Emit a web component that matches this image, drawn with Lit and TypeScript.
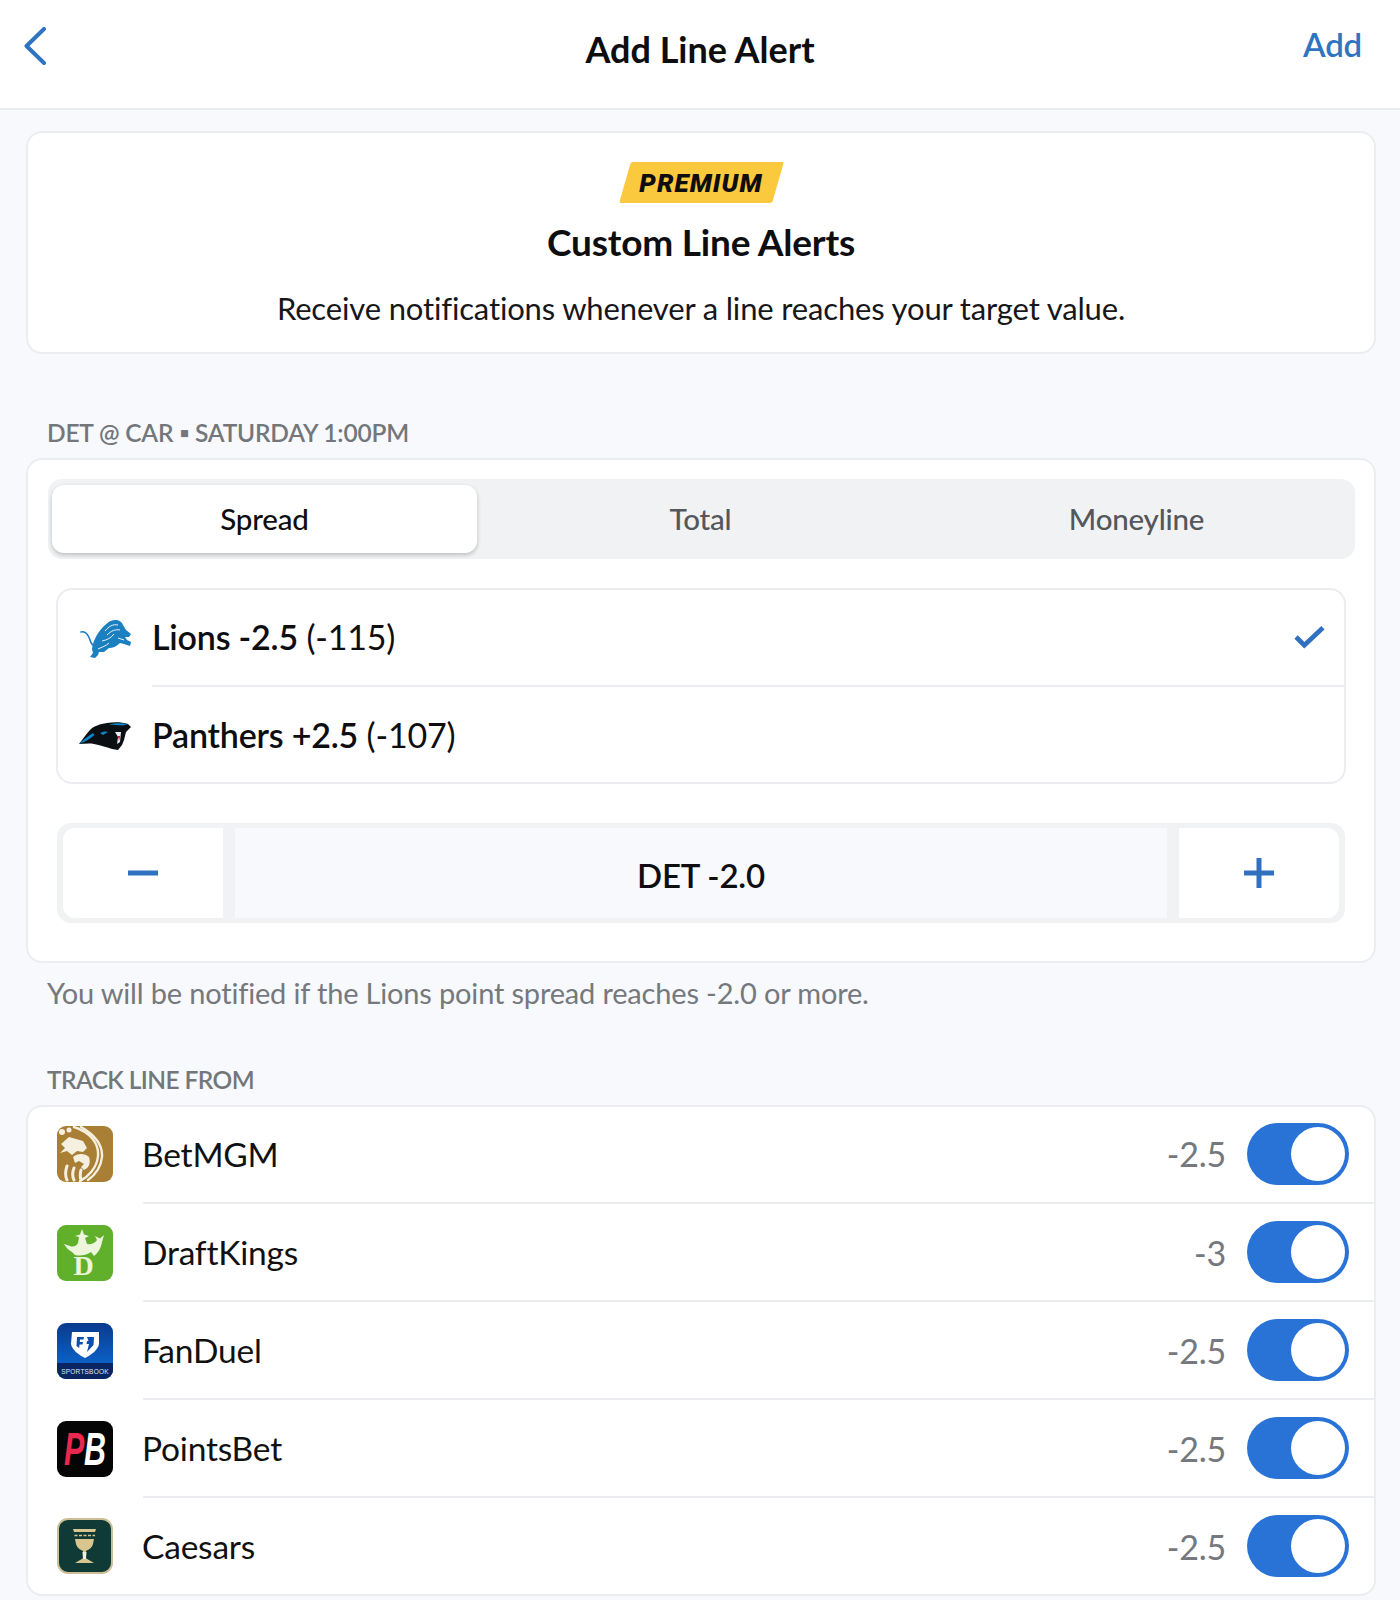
import { LitElement, html, css, svg } from "lit";
import { customElement } from "lit/decorators.js";

const lion = svg`<svg class="team lion" viewBox="0 0 51 39"><path fill="none" stroke="#1b7fc0" stroke-width="1.600" stroke-linecap="round" d="M1 13C5 12 8 15 10 21C11 25 13 27 16 27"/><path fill="#1b7fc0" d="M12 30C13 23 16 15 24 7C28 3 31 1 35 1C39 1 42 3 43 6L46 11L51 15L49 18L45 18L47 21L51 23L50 27L44 25L40 24C37 27 33 29 29 29L24 33L19 33L18 36L15 39L10 38L13 34Z"/><path fill="none" stroke="#fff" stroke-width=".9" d="M25 12C29 7 33 5 38 6M27 16C31 12 35 10 40 11M22 22C27 21 31 19 34 15M18 30C22 28 26 27 29 24M38 19L44 21"/></svg>`;
const panther = svg`<svg class="team panther" viewBox="0 0 52 28"><path fill="#0b0f14" d="M0 22C4 17 7 12 11 8C15 4 21 2 28 1C35 0 43 0 49 2L52 5L49 8L47 10L45 18L43 23L39 28L33 27C27 25 21 23 15 22C10 21 5 22 0 22Z"/><path fill="#0a86c9" d="M0 22C4 18 9 14 14 11L15.500 13C11 17 6 20 0 22ZM30 2.500C36 1 43 1 49 2L44 3.500C39 3 34 3 30 2.500ZM21 11C24 9.500 27 9 29 10L24 13Z"/><path fill="#e8eef0" d="M36 10L42 10L41 20L38 22L39 15Z"/><path fill="#b5121b" d="M39 14L41 14L40 19Z"/></svg>`;

const betmgm = svg`<svg viewBox="0 0 56 56"><rect width="56" height="56" rx="9" fill="#a97f35"/><g fill="none" stroke="#f5efe0" stroke-linecap="round"><path stroke-width="2.400" d="M17 1C33 6 42 17 41 30C40 42 31 51 23 55"/><path stroke-width="2.400" d="M24 1C36 8 46 18 45 31C44 41 38 49 31 54"/><path stroke-width="3" d="M10 40C8 46 8 50 10 54M17 42C15 47 15 50 17 54M24 44C23 48 23 51 24 54"/></g><path fill="#f5efe0" d="M4 18L12 11L26 15L30 22L26 26L20 25L15 29L10 25L3 27L8 22Z"/><path fill="#f5efe0" d="M16 31C20 27 28 27 32 31C34 37 32 42 27 44L24 41L27 38L22 35L18 37Z"/><circle cx="5" cy="6" r="3" fill="#f5efe0"/><circle cx="12" cy="4" r="2.500" fill="#f5efe0"/></svg>`;

const draftkings = svg`<svg viewBox="0 0 56 56"><rect width="56" height="56" rx="9" fill="#61b02b"/><path fill="#edf6dc" d="M7 19L13 21C15 22 19 22 21 18L22 12L18 11L23 9.500L25 4L27 9.500L32 11L28 13L30 19C34 20 38 18 40 15L38 11L43 13.500L47 10L45 17C44 23 41 28 37 31L34 27C28 31 22 31 18 30L15 27C11 25 9 22 7 19Z"/><text x="26.500" y="49.500" text-anchor="middle" class="dk">D</text></svg>`;

const fanduel = svg`<svg viewBox="0 0 56 56"><defs><linearGradient id="fd" x1="0" y1="0" x2="0" y2="1"><stop offset="0" stop-color="#0a3a8e"/><stop offset=".75" stop-color="#0c62c8"/></linearGradient></defs><rect width="56" height="56" rx="9" fill="url(#fd)"/><path fill="#0a2560" d="M0 40H56V47A9 9 0 0 1 47 56H9A9 9 0 0 1 0 47Z"/><path fill="#fff" d="M15 9H42L42 21C41 27 34 32 28 35C22 32 15 27 14 21Z"/><path fill="#0c4fae" d="M20 14H27L26.500 16.500H23L22.800 19H26L25.500 21.500H22.500L22.200 25L19.500 23ZM30 14H37L36.500 22L30 29L32 21H29.500L30 18H31.500Z"/><text x="28" y="51" text-anchor="middle" class="fd">SPORTSBOOK</text></svg>`;

const pointsbet = svg`<svg viewBox="0 0 56 56"><rect width="56" height="56" rx="9" fill="#050505"/><g transform="translate(7 44) scale(.66 1)"><text class="pb"><tspan fill="#e8284f">P</tspan><tspan fill="#fff">B</tspan></text></g></svg>`;

const caesars = svg`<svg viewBox="0 0 56 56"><rect x="1" y="1" width="54" height="54" rx="10" fill="#0f3a36" stroke="#cdbf95" stroke-width="2"/><path fill="#d9c68e" d="M16 11H39L38 14H17ZM18 21H37L36 26C35 30 31 32 29 33L28.500 40L37 45H18L26.500 40L26 33C24 32 20 30 19 26Z"/><path fill="none" stroke="#d9c68e" stroke-width="1.500" stroke-dasharray="3 1.500" d="M17.500 17.500H38"/><path fill="#f3efe0" d="M25.500 34H29.500L29 41H26Z"/></svg>`;

interface Book { name: string; value: string; logo: unknown; }
const books: Book[] = [
  { name: "BetMGM", value: "-2.5", logo: betmgm },
  { name: "DraftKings", value: "-3", logo: draftkings },
  { name: "FanDuel", value: "-2.5", logo: fanduel },
  { name: "PointsBet", value: "-2.5", logo: pointsbet },
  { name: "Caesars", value: "-2.5", logo: caesars },
];

@customElement("app-root")
export class AppRoot extends LitElement {
  static styles = css`
    :host {
      display: block;
      height: 1600px;
      overflow: hidden;
      background: #f7f9fc;
      font-family: "Lato", "Noto Sans", sans-serif;
      color: #0e0e10;
      letter-spacing: -0.2px;
    }
    svg text { font-family: "Liberation Sans", sans-serif; }
    .top {
      height: 110px;
      box-sizing: border-box;
      background: #fff;
      border-bottom: 2px solid #e9ebee;
      display: grid;
      grid-template-columns: 1fr auto 1fr;
      padding: 0 24px;
    }
    .back { width: 22px; height: 38px; margin-top: 27px; color: #2f74c0; }
    .title { font-size: 36px; font-weight: 700; line-height: 98px; letter-spacing: 0; }
    .add { justify-self: end; margin-right: 14px; font-size: 33px; font-weight: 600; color: #2f74c0; line-height: 88px; }
    main { padding: 21px 24px 0 26px; }
    .card {
      background: #fff;
      border: 2px solid #ebedf0;
      border-radius: 16px;
      box-sizing: border-box;
    }
    .promo {
      height: 223px;
      display: flex;
      flex-direction: column;
      align-items: center;
      padding-top: 29px;
      box-sizing: border-box;
    }
    .badge {
      position: relative;
      width: 153px;
      height: 41px;
      box-sizing: border-box;
      display: flex;
      align-items: center;
      justify-content: center;
      font-family: "Roboto", sans-serif;
      font-size: 26px;
      font-weight: 900;
      font-style: italic;
      letter-spacing: 1.1px;
      z-index: 0;
    }
    .badge::before {
      content: "";
      position: absolute;
      inset: 0;
      background: #fbc93d;
      transform: skewX(-16deg);
      border-radius: 2px;
      z-index: -1;
    }
    .promo h1 { margin: 15px 0 0; font-size: 37px; line-height: 48px; font-weight: 700; }
    .promo p { margin: 18px 0 0; font-size: 31px; line-height: 48px; font-weight: 400; color: #17171a; letter-spacing: -0.15px; }
    .label {
      margin: 0 0 0 21px;
      font-size: 24.500px;
      line-height: 32px;
      color: #73767a;
      font-weight: 600;
    }
    .label.first { margin-top: 63px; margin-bottom: 9px; }
    .label.second { margin-top: 52px; margin-bottom: 9px; letter-spacing: -0.6px; }
    .market { height: 505px; padding: 19px 19px 0 20px; }
    .tabs {
      height: 80px;
      box-sizing: border-box;
      border-radius: 14px;
      background: #f1f2f4;
      padding: 6px 4px;
      display: grid;
      grid-template-columns: repeat(3, 1fr);
    }
    .tab {
      display: flex;
      align-items: center;
      justify-content: center;
      box-sizing: border-box;
      padding-bottom: 2px;
      font-size: 29.500px;
      font-weight: 500;
      color: #54575c;
      height: 68px;
    }
    .tab.mid-tab { padding-right: 2px; }
    .tab.last { padding-left: 4px; }
    .tab.on {
      background: #fff;
      color: #0e0e10;
      border-radius: 12px;
      margin-right: 8px;
      box-shadow: 0 2px 4px rgba(0, 0, 0, 0.22);
    }
    .options {
      margin: 29px 9px 0 8px;
      border: 2px solid #ebedf0;
      border-radius: 16px;
      box-sizing: border-box;
      height: 196px;
    }
    .opt { height: 97px; display: flex; align-items: stretch; }
    .opt .logo { width: 94px; display: flex; align-items: center; justify-content: center; }
    .team.lion { width: 51px; height: 39px; margin-left: 1px; }
    .team.panther { width: 52px; height: 28px; }
    .opt .txt {
      flex: 1;
      display: flex;
      align-items: center;
      justify-content: space-between;
      font-size: 34px;
      padding-right: 19px;
    }
    .opt .txt span { margin-top: -2px; }
    .opt.first .txt { border-bottom: 2px solid #ebedf0; }
    .opt .txt b { font-weight: 600; }
    .check { width: 31px; height: 24px; color: #2f70c0; margin-top: -2px; }
    .stepper {
      margin: 39px 10px 0 9px;
      height: 100px;
      box-sizing: border-box;
      border-radius: 14px;
      background: #f1f2f4;
      padding: 5px 6px;
      display: grid;
      grid-template-columns: 160px 1fr 160px;
      column-gap: 12px;
    }
    .btn {
      background: #fff;
      display: flex;
      align-items: center;
      justify-content: center;
    }
    .btn.l { border-radius: 12px 0 0 12px; }
    .btn.r { border-radius: 0 12px 12px 0; }
    .btn svg { width: 30px; height: 30px; color: #2f70c0; }
    .mid {
      background: #f7f9fc;
      display: flex;
      align-items: center;
      justify-content: center;
      font-size: 33px;
      font-weight: 600;
      padding-top: 4px;
      box-sizing: border-box;
    }
    .note { margin: 11px 0 0 21px; font-size: 29px; line-height: 38px; color: #75787c; letter-spacing: -0.17px; }
    .booksCard { height: 491px; overflow: hidden; }
    .row { height: 98px; display: flex; align-items: stretch; padding-left: 29px; }
    .row:first-child { height: 97px; }
    .row .icon { width: 56px; height: 56px; align-self: center; margin-right: 30px; margin-top: -1px; flex: none; }
    .row:first-child .icon, .row:last-child .icon { margin-top: -3px; }
    .row .icon svg { display: block; width: 56px; height: 56px; }
    .row .body {
      flex: 1;
      display: flex;
      align-items: center;
      border-bottom: 2px solid #ebedf0;
      padding-right: 25px;
    }
    .row:first-child .body { padding-bottom: 2px; }
    .row:last-child .body { border-bottom-color: transparent; }
    .row .name { flex: 1; font-size: 33.500px; font-weight: 400; color: #111; margin-left: -1px; }
    .row .val { font-size: 34px; color: #75787c; margin-right: 21px; }
    .sw {
      width: 102px;
      height: 62px;
      border-radius: 31px;
      background: #2a73d6;
      position: relative;
      box-sizing: border-box;
    }
    .sw::after {
      content: "";
      position: absolute;
      right: 4px;
      top: 4px;
      width: 54px;
      height: 54px;
      border-radius: 50%;
      background: #fff;
    }
    .dk { font-family: "Liberation Serif", serif; font-weight: 700; font-size: 28px; fill: #edf6dc; }
    .fd { font-size: 6.500px; fill: #dfe8f5; letter-spacing: 0.2px; }
    .pb { font-size: 46px; font-weight: 700; font-style: italic; }
  `;

  render() {
    return html`
      <header class="top">
        <svg class="back" viewBox="0 0 22 38" fill="none" stroke="currentColor" stroke-width="4" stroke-linecap="round" stroke-linejoin="round"><path d="M20 2L2.500 19L20 36"/></svg>
        <div class="title">Add Line Alert</div>
        <div class="add">Add</div>
      </header>
      <main>
        <section class="card promo">
          <div class="badge">PREMIUM</div>
          <h1>Custom Line Alerts</h1>
          <p>Receive notifications whenever a line reaches your target value.</p>
        </section>
        <div class="label first">DET @ CAR ▪ SATURDAY 1:00PM</div>
        <section class="card market">
          <div class="tabs">
            <div class="tab on">Spread</div>
            <div class="tab mid-tab">Total</div>
            <div class="tab last">Moneyline</div>
          </div>
          <div class="options">
            <div class="opt first">
              <div class="logo">${lion}</div>
              <div class="txt">
                <span><b>Lions -2.5</b> (-115)</span>
                <svg class="check" viewBox="0 0 30 22" fill="none" stroke="currentColor" stroke-width="4.500"><path d="M2 11L10 19L28 2"/></svg>
              </div>
            </div>
            <div class="opt">
              <div class="logo">${panther}</div>
              <div class="txt"><span><b>Panthers +2.5</b> (-107)</span></div>
            </div>
          </div>
          <div class="stepper">
            <div class="btn l"><svg viewBox="0 0 30 30" fill="currentColor"><rect y="12.500" width="30" height="5"/></svg></div>
            <div class="mid">DET -2.0</div>
            <div class="btn r"><svg viewBox="0 0 30 30" fill="currentColor"><rect y="12.500" width="30" height="5"/><rect x="12.500" width="5" height="30"/></svg></div>
          </div>
        </section>
        <div class="note">You will be notified if the Lions point spread reaches -2.0 or more.</div>
        <div class="label second">TRACK LINE FROM</div>
        <section class="card booksCard">
          ${books.map(
            (b) => html`
              <div class="row">
                <div class="icon">${b.logo}</div>
                <div class="body">
                  <div class="name">${b.name}</div>
                  <div class="val">${b.value}</div>
                  <div class="sw"></div>
                </div>
              </div>
            `
          )}
        </section>
      </main>
    `;
  }
}
